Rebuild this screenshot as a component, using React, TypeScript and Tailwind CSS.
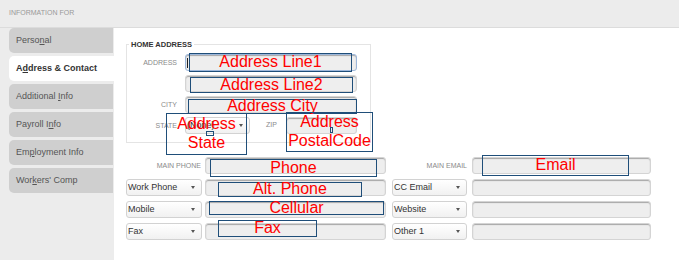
import React from "react";

type Tab = { pre: string; key: string; post: string; active?: boolean };

const TABS: Tab[] = [
  { pre: "Perso", key: "n", post: "al" },
  { pre: "A", key: "d", post: "dress & Contact", active: true },
  { pre: "Additional ", key: "I", post: "nfo" },
  { pre: "Payroll I", key: "n", post: "fo" },
  { pre: "Em", key: "p", post: "loyment Info" },
  { pre: "Wor", key: "k", post: "ers' Comp" },
];

const Input = ({ w, focused }: { w: string; focused?: boolean }) => (
  <div
    className={`relative h-[17px] ${w} rounded-[3px] border bg-[#eeeeee] shadow-[inset_0_1px_1px_rgba(0,0,0,0.3)] ${
      focused ? "border-[#9db7da]" : "border-[#d4d4d4]"
    }`}
  >
    {focused && <div className="absolute left-[1px] top-[3px] h-[10px] w-px bg-[#222]" />}
  </div>
);

const Select = ({ w, value }: { w: string; value: string }) => (
  <div
    className={`flex h-[17px] ${w} items-center justify-between rounded-[3px] border border-[#d2d2d2] bg-gradient-to-b from-white to-[#f1f1f1] pl-[1px] pr-[6px] text-[9px] text-[#333]`}
  >
    <span>{value}</span>
    <span className="h-0 w-0 border-x-[2.5px] border-t-[3px] border-x-transparent border-t-[#555]" />
  </div>
);

const Label = ({ text, w }: { text: string; w: string }) => (
  <div className={`${w} text-right text-[7px] leading-none text-[#8a8a8a]`}>{text}</div>
);

// red annotation boxes drawn over the form
const Note = ({
  x,
  y,
  w,
  h,
  lines,
}: {
  x: number;
  y: number;
  w: number;
  h: number;
  lines: string[];
}) => (
  <div
    className="absolute flex flex-col items-center justify-center border border-[#1f4e79] pb-[2px] text-[16px] leading-[19px] text-[#ff0000] whitespace-nowrap"
    style={{ left: x, top: y, width: w, height: h }}
  >
    {lines.map((l) => (
      <span key={l}>{l}</span>
    ))}
  </div>
);

const PhoneRow = ({ left, right }: { left: React.ReactNode; right: React.ReactNode }) => (
  <div className="flex h-[17px] items-center">
    <div className="flex w-[76px] justify-end">{left}</div>
    <div className="ml-[3px]">
      <Input w="w-[181px]" />
    </div>
    <div className="ml-[6px] flex w-[75px] justify-end">{right}</div>
    <div className="ml-[5px]">
      <Input w="w-[179px]" />
    </div>
  </div>
);

export default function App() {
  return (
    <div
      className="relative h-[260px] w-[679px] overflow-hidden bg-white"
      style={{ fontFamily: '"Liberation Sans", Arial, sans-serif' }}
    >
      <div className="flex h-[28px] items-center border-b border-[#dcdcdc] bg-[#ececec] pl-[9px] text-[7px] text-[#999]">
        INFORMATION FOR
      </div>

      <div className="flex h-[232px]">
        <div className="flex w-[114px] flex-col gap-[3px] bg-[#ececec] pl-[9px]">
          {TABS.map((t) => (
            <div
              key={t.pre + t.post}
              className={`flex h-[25px] items-center whitespace-pre rounded-l-[5px] pl-[7px] text-[9px] ${
                t.active ? "bg-white font-bold text-[#333]" : "mr-px bg-[#cfcfcf] text-[#555]"
              }`}
            >
              <span>
                {t.pre}
                <u>{t.key}</u>
                {t.post}
              </span>
            </div>
          ))}
        </div>

        <div className="flex-1 pl-[12px] pt-[12px]">
          <fieldset className="w-[245px] border border-[#e4e4e4] pb-[8px] pt-[5px]">
            <legend className="ml-[2px] px-[2px] text-[7.5px] font-bold leading-[9px] text-[#333]">
              HOME ADDRESS
            </legend>
            <div className="flex flex-col gap-[4px]">
              <div className="flex items-center gap-[8px]">
                <Label text="ADDRESS" w="w-[50px]" />
                <Input w="w-[172px]" focused />
              </div>
              <div className="flex items-center gap-[8px]">
                <div className="w-[50px]" />
                <Input w="w-[172px]" />
              </div>
              <div className="flex items-center gap-[8px]">
                <Label text="CITY" w="w-[50px]" />
                <Input w="w-[172px]" />
              </div>
              <div className="flex items-center">
                <Label text="STATE" w="w-[50px]" />
                <div className="ml-[8px]">
                  <Select w="w-[65px]" value="(None)" />
                </div>
                <div className="ml-[16px] text-[7px] text-[#8a8a8a]">ZIP</div>
                <div className="ml-[9px]">
                  <Input w="w-[71px]" />
                </div>
              </div>
            </div>
          </fieldset>

          <div className="mt-[14px] flex flex-col gap-[5px]">
            <PhoneRow
              left={<Label text="MAIN PHONE" w="w-full pr-px" />}
              right={<Label text="MAIN EMAIL" w="w-full" />}
            />
            <PhoneRow
              left={<Select w="w-[76px]" value="Work Phone" />}
              right={<Select w="w-[75px]" value="CC Email" />}
            />
            <PhoneRow
              left={<Select w="w-[76px]" value="Mobile" />}
              right={<Select w="w-[75px]" value="Website" />}
            />
            <PhoneRow
              left={<Select w="w-[76px]" value="Fax" />}
              right={<Select w="w-[75px]" value="Other 1" />}
            />
          </div>
        </div>
      </div>

      <Note x={189} y={53} w={163} h={19} lines={["Address Line1"]} />
      <Note x={190} y={77} w={163} h={16} lines={["Address Line2"]} />
      <Note x={188} y={99} w={169} h={15} lines={["Address City"]} />
      <Note x={166} y={113} w={81} h={42} lines={["Address", "State"]} />
      <div className="absolute left-[206px] top-[131px] h-[5px] w-[8px] border border-[#1f4e79]" />
      <Note x={286} y={112} w={87} h={40} lines={["Address", "PostalCode"]} />
      <div className="absolute left-[330px] top-[127px] h-[6px] w-[3px] border border-[#1f4e79]" />
      <Note x={210} y={159} w={167} h={18} lines={["Phone"]} />
      <Note x={218} y={182} w={144} h={15} lines={["Alt. Phone"]} />
      <Note x={209} y={201} w={175} h={14} lines={["Cellular"]} />
      <Note x={218} y={220} w={99} h={17} lines={["Fax"]} />
      <Note x={482} y={155} w={147} h={21} lines={["Email"]} />
    </div>
  );
}
